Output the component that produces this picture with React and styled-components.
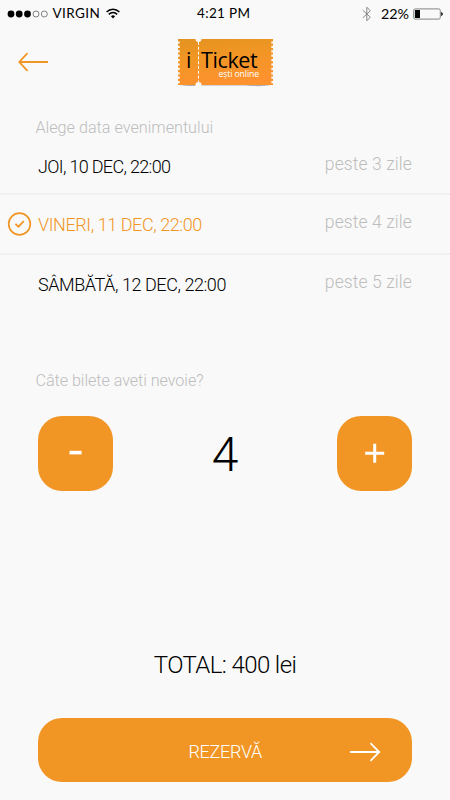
import React from 'react'
import styled, { createGlobalStyle } from 'styled-components'

const ORANGE = '#f19625'

const dates = [
  { id: 1, label: 'JOI, 10 DEC, 22:00', left: 'peste 3 zile', spacing: '-0.67px' },
  { id: 2, label: 'VINERI, 11 DEC, 22:00', left: 'peste 4 zile', selected: true, spacing: '-0.42px' },
  { id: 3, label: 'SÂMBĂTĂ, 12 DEC, 22:00', left: 'peste 5 zile', spacing: '-0.43px' },
]

const StatusBar = () => (
  <StatusBarStyle>
    <div className='carrier'>
      <svg width='42' height='10' viewBox='0 0 42 10'>
        <circle cx='4' cy='5' r='3.4' />
        <circle cx='12.2' cy='5' r='3.4' />
        <circle cx='20.5' cy='5' r='3.4' />
        <circle cx='29' cy='5' r='3' fill='none' stroke='#333' strokeWidth='.6' />
        <circle cx='37.3' cy='5' r='3' fill='none' stroke='#333' strokeWidth='.6' />
      </svg>
      <span className='name'>VIRGIN</span>
      <svg width='14' height='11' viewBox='0 0 14 11' fill='none' stroke='#000' strokeWidth='1.5'>
        <path d='M.6 4.1C4.2.4 9.8.4 13.4 4.1' />
        <path d='M2.8 6.4C5.2 4 8.8 4 11.2 6.4' />
        <path d='M4.9 8.2Q7 6.3 9.1 8.2L7 10.5Z' fill='#000' stroke='none' />
      </svg>
    </div>
    <div className='time'>4:21 PM</div>
    <div className='power'>
      <svg width='10' height='16' viewBox='0 0 10 16' fill='none' stroke='#888' strokeWidth='1'>
        <path d='M.8 4.2L8.3 11.2L4.8 14.8V1.2L8.3 4.8L.8 11.8' />
      </svg>
      <span className='percent'>22%</span>
      <svg width='30' height='12' viewBox='0 0 30 12'>
        <rect x='.7' y='.9' width='26.6' height='10.2' rx='1.6' fill='none' stroke='#666' strokeWidth='.8' />
        <rect x='1.9' y='2' width='5.1' height='8' />
        <path d='M28.2 4Q29.8 4.4 29.8 6Q29.8 7.6 28.2 8Z' />
      </svg>
    </div>
  </StatusBarStyle>
)

const Arrow = ({ color, back }) => (
  <svg width='31' height='20' viewBox='0 0 31 20' fill='none' stroke={color} strokeWidth='1.8'>
    {back ? <path d='M31 10H2.3M10.5 1.2L2.3 10L10.5 18.8' /> : <path d='M0 10H29.2M20.5 1.2L29.2 10L20.5 18.8' />}
  </svg>
)

const Logo = () => (
  <LogoStyle>
    <svg width='96' height='49' viewBox='0 0 96 49'>
      <defs>
        <linearGradient id='ticket' x1='0' y1='0' x2='0.25' y2='1'>
          <stop offset='0' stopColor='#e39220' />
          <stop offset='0.4' stopColor='#f09624' />
          <stop offset='1' stopColor='#fd922e' />
        </linearGradient>
      </defs>
      <path d='M2 46Q12 47.8 19 46.5H68Q84 48 93 46Z' fill='#000' opacity='.3' />
      <path d='M0 0H95V46H0Z' fill='url(#ticket)' />
      <path d='M0 2.4V46M95 2.4V46' stroke='#f9f9f9' strokeWidth='3.4' strokeDasharray='2.2 2.2' />
      <circle cx='20.5' cy='0' r='3' fill='#f9f9f9' />
      <circle cx='20.5' cy='46' r='3' fill='#f9f9f9' />
      <path d='M20.5 3V43' stroke='#fff' strokeWidth='1' strokeDasharray='3 1.8' />
    </svg>
    <div className='brand'><span>i</span><span>Ticket</span></div>
    <div className='motto'>ești online</div>
  </LogoStyle>
)

const DateRow = ({ item }) => (
  <DateRowStyle $selected={item.selected} $spacing={item.spacing}>
    <div className='mark'>
      {item.selected && (
        <svg width='25' height='24' viewBox='0 0 25 24' fill='none' stroke={ORANGE} strokeWidth='1.7'>
          <circle cx='12.5' cy='12' r='10.8' />
          <path d='M8.4 11.8L11.5 14.7L16.8 9.2' />
        </svg>
      )}
    </div>
    <div className='label'>{item.label}</div>
    <div className='left'>{item.left}</div>
  </DateRowStyle>
)

const App = () => {
  return (
    <>
      <GlobalStyle />
      <Screen>
        <StatusBar />
        <Header>
          <Arrow color={ORANGE} back />
          <Logo />
        </Header>
        <Title $spacing='0px'>Alege data evenimentului</Title>
        <div>
          {dates.map((item) => <DateRow key={item.id} item={item} />)}
        </div>
        <Title $second $spacing='-0.06px'>Câte bilete aveti nevoie?</Title>
        <Counter>
          <CountButton aria-label='-'>
            <svg width='20' height='20' viewBox='0 0 20 20'><path d='M3.5 9.6H15.6' stroke='#fff' strokeWidth='3.6' /></svg>
          </CountButton>
          <Count>4</Count>
          <CountButton aria-label='+'>
            <svg width='20' height='20' viewBox='0 0 20 20'><path d='M.2 10.3H19.2M9.7 .8V19.8' stroke='#fff' strokeWidth='3' /></svg>
          </CountButton>
        </Counter>
        <Total>TOTAL: 400 lei</Total>
        <Reserve>
          <span>REZERVĂ</span>
          <Arrow color='#fff' />
        </Reserve>
      </Screen>
    </>
  )
}

const GlobalStyle = createGlobalStyle`
  * {
    box-sizing: border-box;
  }
  body {
    margin: 0;
    background: #f9f9f9;
  }
  svg {
    display: block;
    flex: none;
  }
  button {
    border: 0;
    padding: 0;
    font: inherit;
  }
`

const Screen = styled.div`
  width: 450px;
  height: 800px;
  overflow: hidden;
  display: flex;
  flex-direction: column;
  background: #f9f9f9;
  color: #000;
  font-family: Roboto, 'Open Sans', sans-serif;
  font-weight: 300;
  white-space: nowrap;
`

const StatusBarStyle = styled.div`
  height: 28px;
  padding: 0 7px 1px 6.5px;
  display: grid;
  grid-template-columns: 1fr auto 1fr;
  align-items: center;
  font-family: Lato, sans-serif;
  font-weight: 400;
  font-size: 13.5px;
  line-height: 27px;
  .carrier{
    display: flex;
    align-items: center;
    .name{
      width: 57px;
      padding-left: 4px;
      letter-spacing: 0.4px;
    }
  }
  .time{
    letter-spacing: 0.35px;
    padding-right: 2px;
  }
  .power{
    display: flex;
    align-items: center;
    justify-content: flex-end;
    .percent{
      padding: 0 4px 0 9px;
      font-size: 14.3px;
    }
  }
`

const Header = styled.div`
  height: 90px;
  padding: 11px 0 0 17px;
  display: flex;
  align-items: flex-start;
  > svg{
    margin-top: 13px;
  }
`

const LogoStyle = styled.div`
  position: relative;
  margin-left: 130px;
  width: 96px;
  height: 49px;
  font-family: 'Open Sans', 'Noto Sans', sans-serif;
  font-weight: 400;
  .brand{
    position: absolute;
    left: 8px;
    top: 12px;
    display: flex;
    gap: 10px;
    font-size: 21.5px;
    line-height: 18px;
    letter-spacing: -0.4px;
  }
  .motto{
    position: absolute;
    right: 15px;
    top: 31px;
    color: #fff;
    font-size: 8.7px;
    line-height: 9px;
    letter-spacing: -0.1px;
  }
`

const Title = styled.div`
  height: ${(props) => (props.$second ? '44.5px' : '19px')};
  margin-top: ${(props) => (props.$second ? '56px' : '0')};
  padding-left: 35.5px;
  color: #bdbdbd;
  font-size: 16.2px;
  line-height: 19px;
  letter-spacing: ${(props) => props.$spacing};
`

const DateRowStyle = styled.div`
  height: 60px;
  padding: 0 38px 0 7px;
  display: flex;
  align-items: center;
  border-bottom: 2px solid #f1f1f1;
  &:first-child{
    height: 58px;
    padding-top: 3px;
  }
  &:last-child{
    border-bottom-color: transparent;
  }
  .mark{
    width: 31px;
  }
  .label{
    flex: 1;
    color: ${(props) => (props.$selected ? ORANGE : '#000')};
    font-size: 18px;
    letter-spacing: ${(props) => props.$spacing};
  }
  .left{
    color: #bdbdbd;
    font-size: 17.5px;
    letter-spacing: 0.1px;
    padding-bottom: 5px;
  }
`

const Counter = styled.div`
  height: 75px;
  padding: 0 38px;
  display: flex;
  justify-content: space-between;
`

const CountButton = styled.button`
  width: 75px;
  height: 75px;
  display: flex;
  align-items: center;
  justify-content: center;
  border-radius: 24px;
  background: ${ORANGE};
`

const Count = styled.div`
  font-size: 48px;
  font-weight: 300;
  line-height: 77px;
`

const Total = styled.div`
  margin-top: 159px;
  height: 68px;
  text-align: center;
  font-size: 24px;
  line-height: 30px;
  letter-spacing: -0.6px;
`

const Reserve = styled.button`
  flex: none;
  margin: 0 38px;
  height: 64px;
  padding: 5px 31px 0 0;
  display: flex;
  align-items: center;
  justify-content: flex-end;
  gap: 88px;
  border-radius: 24px;
  background: ${ORANGE};
  color: #fff;
  font-size: 18px;
  line-height: 20px;
  letter-spacing: -0.3px;
`

export default App
